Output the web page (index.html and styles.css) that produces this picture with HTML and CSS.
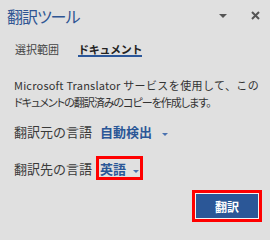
FILE: index.html
```html
<!DOCTYPE html>
<html lang="ja">
<head>
<meta charset="utf-8">
<link rel="stylesheet" href="styles.css">
</head>
<body>
<div class="pane">
  <div class="header">
    <div class="title">翻訳ツール</div>
    <div class="icons">
      <svg class="ico-caret" width="8" height="4" viewBox="0 0 8 4"><path d="M0 0H8L4 4Z" fill="#555"/></svg>
      <svg class="ico-close" width="9" height="9" viewBox="0 0 9 9"><path d="M1 1L8 8M8 1L1 8" stroke="#555" stroke-width="2"/></svg>
    </div>
  </div>
  <div class="tabs">
    <div class="tab">選択範囲</div>
    <div class="tab active">ドキュメント</div>
  </div>
  <div class="desc">
    <span class="line first">Microsoft Translator <span class="wide-ja">サービスを使用して、この</span></span>
    <span class="line">ドキュメントの翻訳済みのコピーを作成します。</span>
  </div>
  <div class="row">
    <span class="label">翻訳元の言語</span>
    <span class="value">自動検出<svg class="caret wide" width="6" height="3" viewBox="0 0 6 3"><path d="M0 0H6L3 3Z" fill="#4a72b0"/></svg></span>
  </div>
  <div class="row second">
    <span class="label">翻訳先の言語</span>
    <span class="value boxed">英語<svg class="caret" width="6" height="3" viewBox="0 0 6 3"><path d="M0 0H6L3 3Z" fill="#4a72b0"/></svg></span>
  </div>
  <div class="actions">
    <div class="btn-outline"><button class="btn">翻訳</button></div>
  </div>
</div>
</body>
</html>
```
FILE: styles.css
```css
html, body {
  margin: 0;
  padding: 0;
}
body {
  width: 270px;
  height: 240px;
  background: #e0e0e0;
  font-family: "Noto Sans CJK JP", "Noto Sans", sans-serif;
  color: #333;
  overflow: hidden;
}
.pane {
  display: flex;
  flex-direction: column;
}
.header {
  height: 31px;
  display: flex;
  align-items: center;
  justify-content: space-between;
  padding-left: 7px;
}
.title {
  font-size: 16px;
  line-height: 20px;
  color: #2f5593;
  letter-spacing: -1px;
  font-feature-settings: "palt";
}
.icons {
  display: flex;
  align-items: center;
  padding-right: 10px;
}
.ico-caret {
  margin-right: 24px;
}
.tabs {
  display: flex;
  gap: 19px;
  margin-top: 12px;
  padding-left: 15px;
}
.tab {
  font-size: 11px;
  line-height: 12px;
  color: #444;
  border-bottom: 2px solid transparent;
}
.tab.active {
  font-weight: bold;
  color: #222;
  border-bottom-color: #2b579a;
  letter-spacing: -0.3px;
}
.desc {
  margin: 20px 0 0 14px;
  font-size: 11px;
  line-height: 17px;
  color: #333;
}
.line {
  display: block;
  white-space: nowrap;
  font-feature-settings: "palt";
  letter-spacing: -1px;
}
.line.first {
  font-feature-settings: normal;
  letter-spacing: 0.2px;
}
.wide-ja {
  letter-spacing: 0.4px;
}
.row {
  display: flex;
  align-items: center;
  margin: 10px 0 0 14px;
  height: 20px;
}
.row.second {
  margin-top: 15px;
  height: 24px;
}
.label {
  font-size: 13px;
  color: #3a3a3a;
}
.value {
  display: flex;
  align-items: center;
  margin-left: 8px;
  font-size: 13px;
  font-weight: bold;
  color: #2b5797;
}
.caret {
  margin-left: 7px;
  margin-top: 6px;
}
.caret.wide {
  margin-left: 10px;
}
.value.boxed {
  margin-left: 4px;
  border: 3px solid #f00;
  height: 18px;
  padding: 0 1px 0 1px;
}
.actions {
  display: flex;
  justify-content: flex-end;
  margin-top: 10px;
  padding-right: 8px;
}
.btn-outline {
  border: 3px solid #f00;
}
.btn {
  display: block;
  width: 64px;
  height: 26px;
  border: 1px solid #f2f2f2;
  background: #2b5797;
  color: #fff;
  font-family: "Noto Sans CJK JP", sans-serif;
  font-size: 12px;
  font-weight: bold;
  padding: 0;
}
```
